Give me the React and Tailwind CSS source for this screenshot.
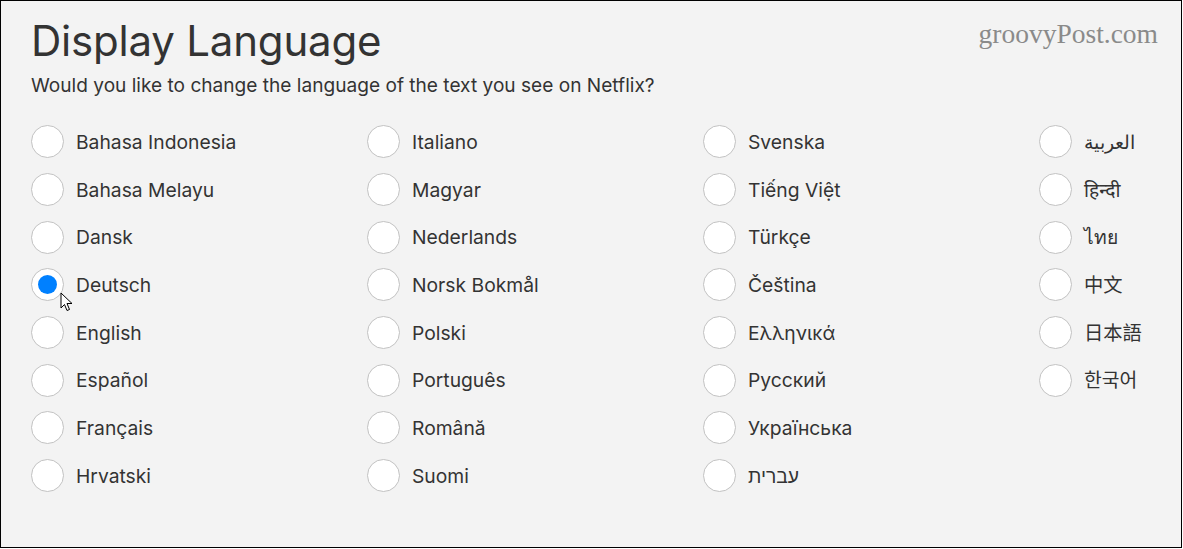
import React from "react";

const cols = [
  ["Bahasa Indonesia", "Bahasa Melayu", "Dansk", "Deutsch", "English", "Español", "Français", "Hrvatski"],
  ["Italiano", "Magyar", "Nederlands", "Norsk Bokmål", "Polski", "Português", "Română", "Suomi"],
  ["Svenska", "Tiếng Việt", "Türkçe", "Čeština", "Ελληνικά", "Русский", "Українська", "עברית"],
  ["العربية", "हिन्दी", "ไทย", "中文", "日本語", "한국어"],
];

function Radio({ checked }) {
  return (
    <div className="w-[33px] h-[33px] rounded-full bg-white border border-[#c2c2c2] flex items-center justify-center shrink-0">
      {checked && <div className="w-[19px] h-[19px] rounded-full bg-[#0080ff]" />}
    </div>
  );
}

export default function App() {
  return (
    <div className="w-[1183px] h-[549px] bg-white">
      <div
        className="w-[1182px] h-[548px] border border-black bg-[#f3f3f3] relative text-[#333]"
        style={{ fontFamily: "Inter, 'Noto Sans', 'Noto Sans CJK SC', sans-serif" }}
      >
        <div
          className="absolute right-[23px] top-[15px] text-[27.5px] leading-[36px] text-[#8a8a8a]"
          style={{ fontFamily: "'Liberation Serif', 'DejaVu Serif', serif" }}
        >
          groovyPost.com
        </div>
        <div className="pl-[30px] pt-[14px]">
          <h1 className="text-[42px] leading-[52px] font-normal tracking-[-0.2px]">Display Language</h1>
          <p className="text-[19.1px] leading-[26px] mt-[5px]">Would you like to change the language of the text you see on Netflix?</p>
          <div className="mt-[20px] grid grid-flow-col grid-cols-[336px_336px_336px_auto] grid-rows-[repeat(8,47.7px)]">
            {cols.map((col, ci) =>
              col.map((name, ri) => (
                <div key={ci + "-" + ri} className="flex items-center gap-[12px]" style={{ gridColumn: ci + 1, gridRow: ri + 1 }}>
                  <Radio checked={name === "Deutsch"} />
                  <span className="text-[19.3px] leading-[24px]">{name}</span>
                </div>
              ))
            )}
          </div>
        </div>
        <svg className="absolute left-[59px] top-[291px]" width="13" height="20" viewBox="0 0 13 20">
          <path d="M1 1 L1 16 L4.5 12.5 L7 18.5 L9.5 17.5 L7 11.5 L12 11.5 Z" fill="white" stroke="black" strokeWidth="1" strokeLinejoin="round" />
        </svg>
      </div>
    </div>
  );
}
